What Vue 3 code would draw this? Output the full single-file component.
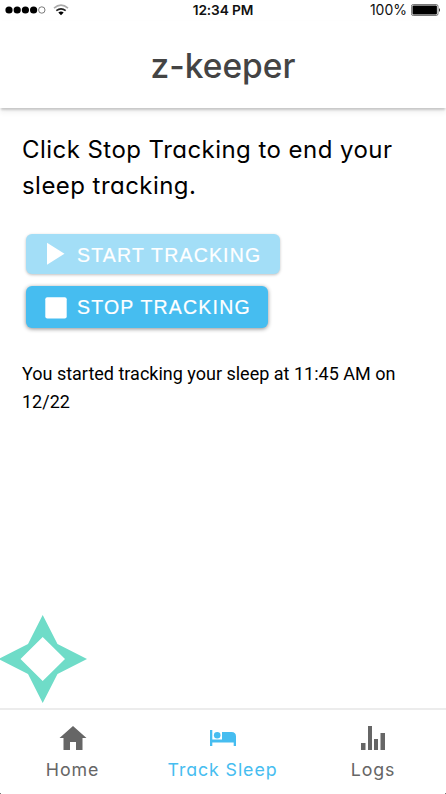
<script setup>
const tracking = {
  time: '11:45 AM',
  date: '12/22',
}
const dots = [true, true, true, true, false]
</script>

<template>
  <div class="screen">
    <div class="status">
      <div class="signal">
        <svg class="dots" width="42" height="10" viewBox="0 0 42 10">
          <circle
            v-for="(on, i) in dots"
            :key="i"
            :cx="4 + i * 8.2"
            cy="5"
            :r="on ? 3.6 : 3.2"
            :fill="on ? '#000' : 'none'"
            :stroke="on ? 'none' : '#444'"
            stroke-width="0.7"
          />
        </svg>
        <svg class="wifi" width="16" height="12" viewBox="0 0 16 12">
          <path d="M1 4.2Q8-1.8 15 4.2" fill="none" stroke="#aaa" stroke-width="1.6" />
          <path d="M3.3 6.7Q8 2.9 12.7 6.7" fill="none" stroke="#222" stroke-width="1.6" />
          <path d="M5.3 8.6Q8 6.4 10.7 8.6L8 11.3Z" fill="#000" />
        </svg>
      </div>
      <span class="clock">12:34 PM</span>
      <div class="power">
        <span>100%</span>
        <svg width="30" height="12" viewBox="0 0 30 12">
          <rect x="0.4" y="0.5" width="26.6" height="11" rx="1.8" fill="#fff" stroke="#555" stroke-width="0.8" />
          <rect x="1.5" y="1.5" width="24.4" height="9" rx="1" fill="#000" />
          <path d="M28 4Q30 6 28 8Z" fill="#222" />
        </svg>
      </div>
    </div>

    <header class="header"><h1>z-keeper</h1></header>

    <main class="content">
      <p class="prompt">Click Stop Tracking to end your<br />sleep tracking.</p>
      <button class="btn start" disabled>
        <svg width="22" height="24" viewBox="0 0 22 24"><path d="M2 0.7L19.5 11.7L2 22.7Z" fill="#fff" /></svg>
        <span>START TRACKING</span>
      </button>
      <button class="btn stop">
        <svg width="22" height="24" viewBox="0 0 22 24"><rect x="0.3" y="2.2" width="21.4" height="21.4" rx="2" fill="#fff" /></svg>
        <span>STOP TRACKING</span>
      </button>
      <p class="note">You started tracking your sleep at {{ tracking.time }} on<br />{{ tracking.date }}</p>
      <svg class="star" width="87" height="88" viewBox="0 0 87 88">
        <path
          d="M42.7 0L57.5 29L87 44L57.5 59L42.7 88L28 59L-1.5 44L28 29ZM42.7 22L20.5 44L42.7 66L65 44Z"
          fill="#6fdcc8"
          fill-rule="evenodd"
        />
      </svg>
    </main>

    <nav class="tabs">
      <a class="tab">
        <svg width="28" height="26" viewBox="0 0 28 26">
          <path d="M14 1L27.5 13H23.5V25H17V17H11V25H4.5V13H0.5Z" fill="#666" />
        </svg>
        <span>Home</span>
      </a>
      <a class="tab active">
        <svg width="28" height="26" viewBox="0 0 28 26">
          <path
            d="M1 5H3.3V14.5H13V7H22.5Q27 7 27 11.5V21H24.7V17.5H3.3V21H1Z"
            fill="#46bdf0"
          />
          <circle cx="8.2" cy="10.2" r="3.3" fill="#46bdf0" />
        </svg>
        <span>Track Sleep</span>
      </a>
      <a class="tab">
        <svg width="26" height="26" viewBox="0 0 26 26">
          <path d="M1 18H5.5V25H1ZM8 1H12V25H8ZM14 14H18V25H14ZM20.5 8H25V25H20.5Z" fill="#666" />
        </svg>
        <span>Logs</span>
      </a>
    </nav>
    <div class="corners"><i></i><i></i></div>
  </div>
</template>

<style>
body {
  margin: 0;
  background: #fff;
}
</style>

<style scoped>
.screen {
  width: 446px;
  height: 794px;
  display: flex;
  flex-direction: column;
  overflow: hidden;
  background: #fff;
  color: #000;
  font-family: Inter, "Liberation Sans", sans-serif;
}
.status {
  height: 21px;
  flex: none;
  display: grid;
  grid-template-columns: 1fr auto 1fr;
  align-items: center;
  padding: 0 5px 1px 5px;
  box-sizing: border-box;
  font-size: 14px;
  line-height: 20px;
  color: #111;
}
.signal {
  display: flex;
  align-items: center;
  gap: 6px;
}
.clock {
  font-weight: 600;
  font-size: 13.7px;
  letter-spacing: -0.1px;
}
.power {
  display: flex;
  align-items: center;
  justify-content: flex-end;
  gap: 4px;
}
.header {
  height: 87px;
  flex: none;
  display: flex;
  justify-content: center;
  background: #fff;
  box-shadow: 0 3px 2px -1px rgba(0, 0, 0, 0.17), 0 4px 6px rgba(0, 0, 0, 0.07);
}
h1 {
  margin: 25px 0 0;
  font-size: 33.5px;
  line-height: 40px;
  font-weight: 500;
  color: #444;
}
.content {
  flex: 1;
  display: flex;
  flex-direction: column;
  align-items: flex-start;
}
.prompt {
  margin: 24px 0 0 22px;
  font-size: 24px;
  line-height: 36px;
  letter-spacing: 0.45px;
  font-feature-settings: "cv11";
  white-space: nowrap;
}
.btn {
  display: flex;
  align-items: center;
  gap: 10px;
  margin: 0 0 0 26px;
  padding: 0 0 0 19px;
  border: 0;
  border-radius: 6px;
  box-sizing: border-box;
  color: #fff;
  font: 19.5px/24px "Liberation Sans", Arial, sans-serif;
  letter-spacing: 1.2px;
  -webkit-text-stroke: 0.2px #fff;
  white-space: nowrap;
}
.start {
  width: 254px;
  height: 40px;
  margin-top: 30px;
  background: #a3def7;
  box-shadow: 0 1px 3px rgba(0, 0, 0, 0.25);
}
.start span {
  padding-top: 2px;
}
.stop {
  width: 242px;
  height: 42px;
  margin-top: 12px;
  background: #46bdf0;
  box-shadow: 0 1px 4px rgba(0, 0, 0, 0.45);
}
.note {
  margin: 32px 0 0 22px;
  font: 18px/28px Roboto, sans-serif;
  white-space: nowrap;
}
.star {
  margin-top: auto;
  margin-bottom: 5px;
}
.tabs {
  height: 85px;
  flex: none;
  box-sizing: border-box;
  border-top: 2px solid #ececec;
  display: grid;
  grid-template-columns: 145px 155px 146px;
}
.tab {
  display: flex;
  flex-direction: column;
  align-items: center;
  padding-top: 15px;
  gap: 6px;
  color: #666;
  font-size: 17.8px;
  line-height: 26px;
  letter-spacing: 0.9px;
  font-feature-settings: "cv11";
  white-space: nowrap;
}
.active {
  color: #46bdf0;
}
.corners {
  flex: none;
  height: 1px;
  display: flex;
  justify-content: space-between;
}
.corners i {
  width: 1px;
  height: 1px;
  background: #777;
}
</style>
